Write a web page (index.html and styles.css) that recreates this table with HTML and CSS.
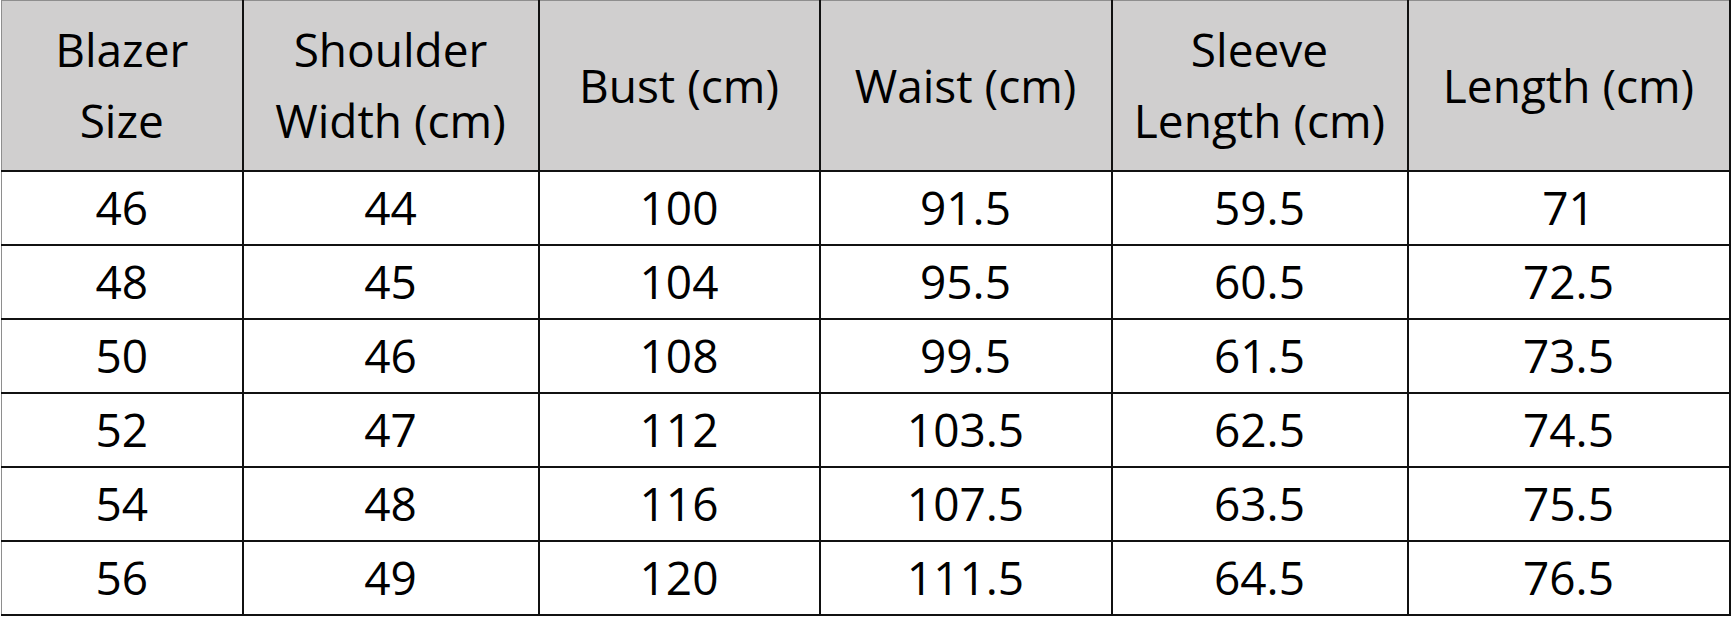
FILE: index.html
```html
<!DOCTYPE html>
<html lang="en">
<head>
<meta charset="utf-8">
<title>Blazer Size Chart</title>
<link rel="stylesheet" href="styles.css">
</head>
<body>
<table class="size-table">
  <colgroup>
    <col class="c1"><col class="c2"><col class="c3"><col class="c4"><col class="c5"><col class="c6">
  </colgroup>
  <thead>
    <tr class="head-row">
      <th>Blazer<br>Size</th>
      <th>Shoulder<br>Width (cm)</th>
      <th>Bust (cm)</th>
      <th>Waist (cm)</th>
      <th>Sleeve<br>Length (cm)</th>
      <th>Length (cm)</th>
    </tr>
  </thead>
  <tbody>
    <tr><td>46</td><td>44</td><td>100</td><td>91.5</td><td>59.5</td><td>71</td></tr>
    <tr><td>48</td><td>45</td><td>104</td><td>95.5</td><td>60.5</td><td>72.5</td></tr>
    <tr><td>50</td><td>46</td><td>108</td><td>99.5</td><td>61.5</td><td>73.5</td></tr>
    <tr><td>52</td><td>47</td><td>112</td><td>103.5</td><td>62.5</td><td>74.5</td></tr>
    <tr><td>54</td><td>48</td><td>116</td><td>107.5</td><td>63.5</td><td>75.5</td></tr>
    <tr><td>56</td><td>49</td><td>120</td><td>111.5</td><td>64.5</td><td>76.5</td></tr>
  </tbody>
</table>
</body>
</html>
```

FILE: styles.css
```css
html, body {
  margin: 0;
  padding: 0;
  background: #ffffff;
}

body {
  padding-left: 1px;
}

.size-table {
  border-collapse: collapse;
  table-layout: fixed;
  width: 1728px;
  font-family: "Open Sans", "Noto Sans", sans-serif;
  font-size: 46px;
  color: #000000;
  border-top: 1px solid #8e8e8e;
  border-left: 1px solid #8e8e8e;
  border-right: 2px solid #111111;
  border-bottom: 2px solid #111111;
}

.c1 { width: 241px; }
.c2 { width: 296px; }
.c3 { width: 281px; }
.c4 { width: 292px; }
.c5 { width: 296px; }
.c6 { width: 322px; }

.size-table th,
.size-table td {
  padding: 0;
  text-align: center;
  vertical-align: middle;
  font-weight: 400;
  line-height: 71px;
  border-right: 2px solid #111111;
  border-bottom: 2px solid #111111;
}

.size-table th {
  background: #d0cfcf;
}

.head-row {
  height: 170px;
}

.size-table tbody tr {
  height: 74px;
}
```
